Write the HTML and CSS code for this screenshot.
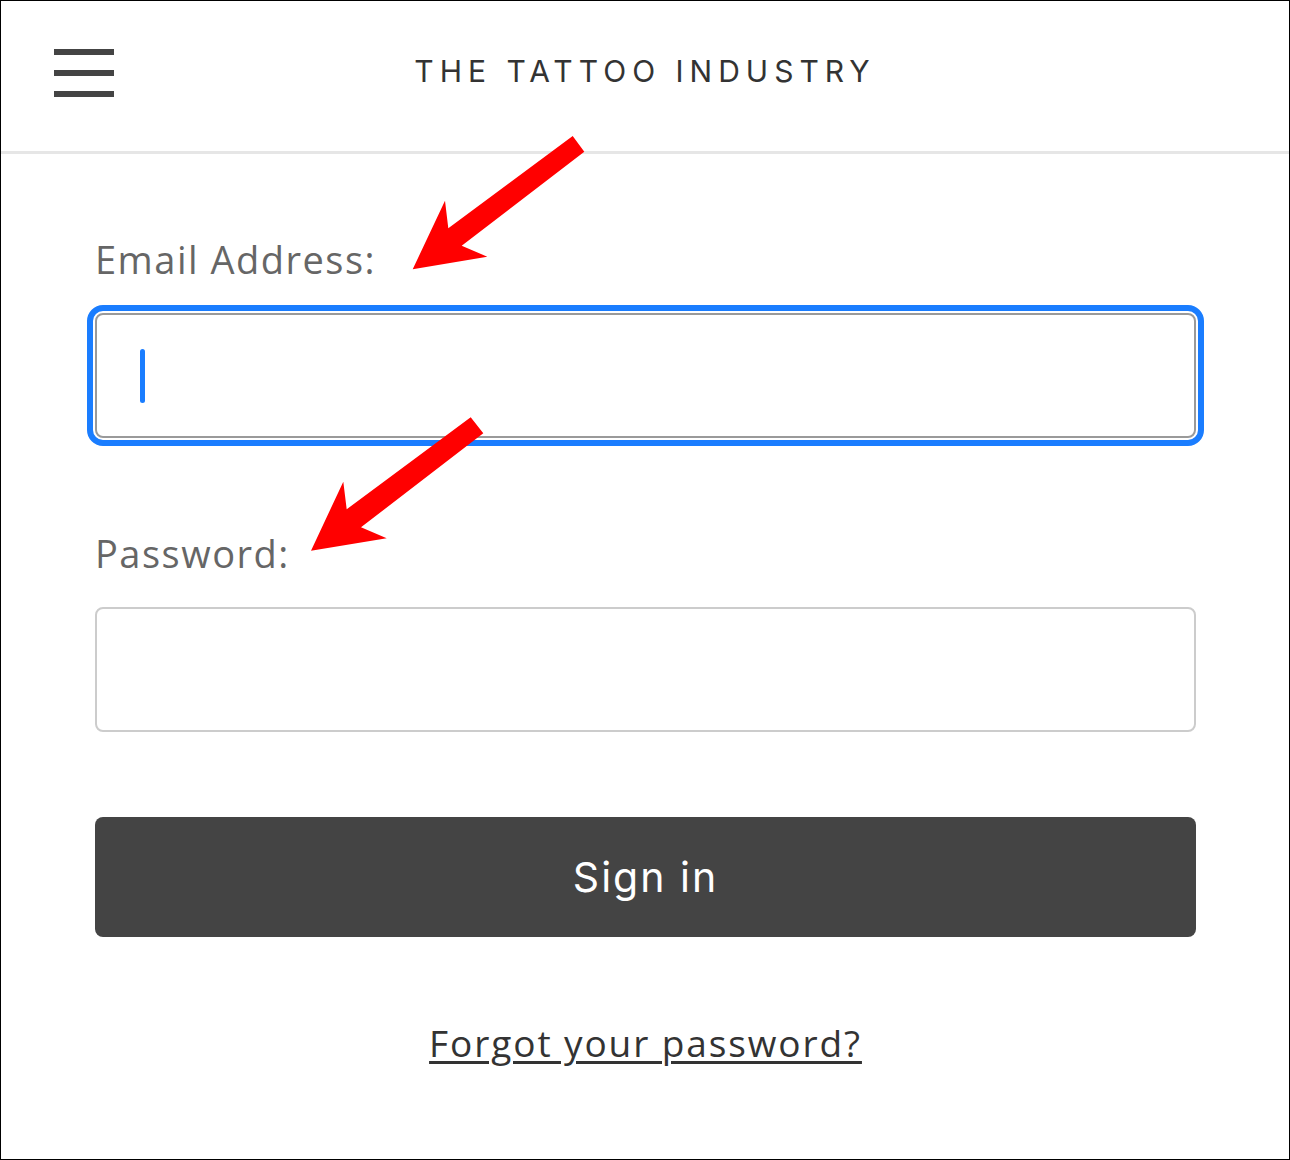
FILE: index.html
```html
<!DOCTYPE html>
<html lang="en">
<head>
<meta charset="utf-8">
<title>The Tattoo Industry – Sign in</title>
<link rel="stylesheet" href="styles.css">
</head>
<body>
<div class="page">
  <header class="header">
    <div class="hamburger" aria-label="Menu">
      <span class="bar"></span>
      <span class="bar"></span>
      <span class="bar"></span>
    </div>
    <div class="brand">THE TATTOO INDUSTRY</div>
    <div class="spacer"></div>
  </header>

  <main class="form">
    <div class="label label-email">Email Address:</div>
    <div class="field field-focus" role="textbox"><span class="caret"></span></div>

    <div class="label label-password">Password:</div>
    <div class="field field-password" role="textbox"></div>

    <div class="button">Sign in</div>

    <div class="forgot"><a class="forgot-link" href="#">Forgot your password?</a></div>
  </main>

  <svg class="annotations" width="1290" height="1160" viewBox="0 0 1290 1160" aria-hidden="true">
    <polygon fill="#ff0000" points="572.7,136 584.3,151.7 461.7,245.7 487.3,256.7 412.7,269.3 445,200.7 448.3,228.3"/>
    <polygon fill="#ff0000" points="470.7,417.3 483.3,433.3 361,527.3 386.7,538.3 311,550.7 343.3,481.7 346.7,509.3"/>
  </svg>
</div>
</body>
</html>
```

FILE: styles.css
```css
* { box-sizing: border-box; }

html, body {
  margin: 0;
  padding: 0;
  background: #ffffff;
}

.page {
  position: relative;
  width: 1290px;
  height: 1160px;
  border: 1px solid #000000;
  background: #ffffff;
  overflow: hidden;
}

.header {
  height: 153px;
  border-bottom: 3px solid #e6e6e6;
  display: grid;
  grid-template-columns: 1fr auto 1fr;
  align-items: start;
  padding-left: 53px;
}

.hamburger {
  margin-top: 48px;
  display: flex;
  flex-direction: column;
  gap: 15px;
  width: 60px;
}

.bar {
  display: block;
  width: 60px;
  height: 6px;
  background: #444444;
}

.brand {
  margin-top: 52px;
  font-family: Inter, "Liberation Sans", sans-serif;
  font-size: 30px;
  line-height: 36px;
  font-weight: 400;
  letter-spacing: 6px;
  color: #333333;
  white-space: nowrap;
  margin-left: -53px;
}

.form {
  padding: 0 93px 0 94px;
  display: flex;
  flex-direction: column;
}

.label {
  font-family: "Open Sans", "Liberation Sans", sans-serif;
  font-size: 38px;
  line-height: 46px;
  color: #666666;
  letter-spacing: 1.5px;
}

.label-email { margin-top: 82px; }
.label-password { margin-top: 92px; }

.field {
  height: 125px;
  border: 2px solid #cccccc;
  border-radius: 8px;
  background: #ffffff;
  display: flex;
  align-items: center;
  padding-left: 43px;
}

.field-focus {
  margin-top: 31px;
  border-color: #9a9a9a;
  outline: 6px solid #1a7dff;
  outline-offset: 2px;
}

.field-password { margin-top: 31px; }

.caret {
  display: block;
  width: 5px;
  height: 54px;
  border-radius: 3px;
  background: #1a7dff;
}

.button {
  margin-top: 85px;
  height: 120px;
  border-radius: 8px;
  background: #444444;
  color: #ffffff;
  display: flex;
  align-items: center;
  justify-content: center;
  font-family: Inter, "Liberation Sans", sans-serif;
  font-size: 41px;
  font-weight: 400;
  letter-spacing: 2px;
}

.forgot {
  margin-top: 84px;
  text-align: center;
  font-family: "Open Sans", "Liberation Sans", sans-serif;
  font-size: 37px;
  line-height: 44px;
  letter-spacing: 1.9px;
}

.forgot-link {
  color: #333333;
  text-decoration: underline;
  text-decoration-thickness: 3px;
  text-underline-offset: 4px;
}

.annotations {
  position: absolute;
  left: -1px;
  top: -1px;
  pointer-events: none;
}
```
